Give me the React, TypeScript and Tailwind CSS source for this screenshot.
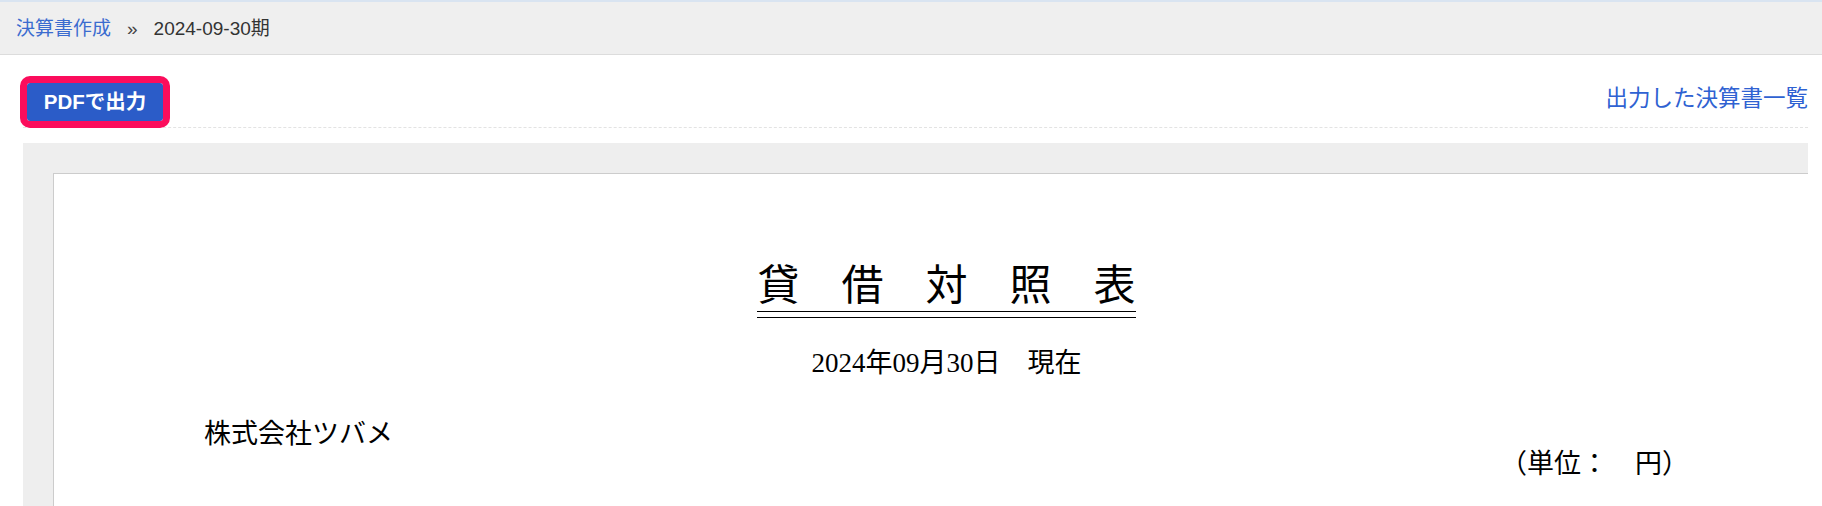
import React from "react";

const sans = "font-['Liberation_Sans','Noto_Sans_CJK_JP',sans-serif]";
const mincho = "font-['Liberation_Serif','Noto_Sans_CJK_JP',serif]";

export default function App() {
    return (
        <div className={`h-[506px] w-[1822px] overflow-hidden bg-white flex flex-col ${sans}`}>
            {/* Breadcrumb bar */}
            <div className="border-t-2 border-[#d9e4f1] bg-[#efefef] border-b border-b-[#dcdcdc] h-[55px] shrink-0 flex items-center pl-[16px] text-[19px] leading-none">
                <a href="#" className="text-[#3b6ccf]">決算書作成</a>
                <span className="mx-[16px] text-[#444]">»</span>
                <span className="text-[#333]">2024-09-30期</span>
            </div>

            <div className="flex-1 flex flex-col pl-[23px] pr-[14px] min-h-0">
                {/* Toolbar */}
                <div className="flex items-start justify-between pt-[28px] pb-[6px] border-b border-dashed border-[#e3e3e3]">
                    <button className="ml-[4px] h-[38px] w-[136px] bg-[#2b5cc8] text-white text-[20.5px] font-bold outline-[7px] outline-solid outline-[#fb0d5c] rounded-[3px] flex items-center justify-center">
                        PDFで出力
                    </button>
                    <a href="#" className="mt-[2px] text-[#2f62d2] text-[22.5px] leading-[28px]">出力した決算書一覧</a>
                </div>

                {/* Preview */}
                <div className="mt-[15px] flex-1 bg-[#eeeeee] pt-[30px] pl-[30px] overflow-hidden">
                    <div className="w-[1786px] h-[600px] bg-white border-l border-t border-[#cccccc] px-[150px] pt-[91px] text-black">
                        <div className="flex justify-center">
                            <div className="border-b border-black pb-[5px]">
                                <div className={`border-b border-black pb-[4px] text-[42px] leading-[42px] ${mincho}`}>
                                    貸　借　対　照　表
                                </div>
                            </div>
                        </div>
                        <div className={`mt-[32px] text-center text-[27px] leading-[27px] ${mincho}`}>
                            2024年09月30日　現在
                        </div>
                        <div className={`mt-[44px] text-[27px] leading-[27px] ${mincho}`}>
                            株式会社ツバメ
                        </div>
                        <div className={`mt-[3px] text-right text-[27px] leading-[27px] ${mincho}`}>
                            （単位：　円）
                        </div>
                    </div>
                </div>
            </div>
        </div>
    );
}
